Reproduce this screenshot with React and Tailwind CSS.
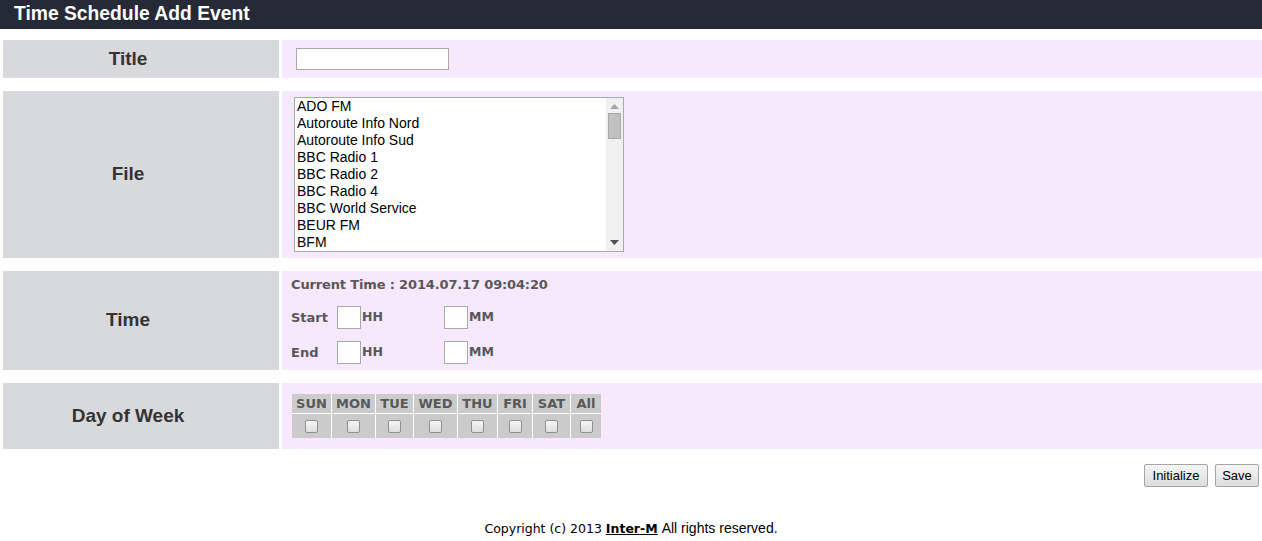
import React from "react";

const items = [
  "ADO FM",
  "Autoroute Info Nord",
  "Autoroute Info Sud",
  "BBC Radio 1",
  "BBC Radio 2",
  "BBC Radio 4",
  "BBC World Service",
  "BEUR FM",
  "BFM",
];

const days = [
  ["SUN", "w-[39px]"],
  ["MON", "w-[43px]"],
  ["TUE", "w-[37px]"],
  ["WED", "w-[43px]"],
  ["THU", "w-[39px]"],
  ["FRI", "w-[34px]"],
  ["SAT", "w-[37px]"],
  ["All", "w-[30px]"],
];

function Row({ label, h, children, className = "" }) {
  return (
    <div className="flex gap-[3px] pl-[3px]" style={{ height: h }}>
      <div className="w-[276px] shrink-0 bg-[#d8d9dc] flex items-center justify-center pr-[26px] text-[19px] font-bold text-[#333]">
        {label}
      </div>
      <div className={"flex-1 bg-[#f6e9fd] " + className}>{children}</div>
    </div>
  );
}

function Check() {
  return (
    <span className="block w-[13px] h-[13px] rounded-[2px] border border-[#8e8f8f] bg-gradient-to-b from-[#f6f6f6] to-[#dedede]" />
  );
}

function SmallBox() {
  return <span className="block w-[24px] h-[23px] bg-white border border-[#a9a9a9]" />;
}

export default function App() {
  return (
    <div className="w-[1262px] h-[541px] bg-white font-['Liberation_Sans',Arial,sans-serif] overflow-hidden">
      <div className="h-[29px] bg-[#262a36] flex items-center pl-[14px] text-white text-[19.3px] font-bold">
        Time Schedule Add Event
      </div>

      <div className="mt-[11px] flex flex-col gap-[13px]">
        <Row label="Title" h={38} className="flex items-center pl-[14px]">
          <span className="block w-[153px] h-[22px] bg-white border border-[#a9a9a9]" />
        </Row>

        <Row label="File" h={167} className="pt-[6px] pl-[12px]">
          <div className="w-[330px] h-[155px] bg-white border border-[#a9a9a9] flex">
            <div className="flex-1 pl-[2px] text-[14px] leading-[17px] text-black">
              {items.map((t) => (
                <div key={t}>{t}</div>
              ))}
            </div>
            <div className="w-[17px] bg-[#f0f0f0] flex flex-col items-center">
              <svg width="9" height="5" viewBox="0 0 9 5" className="mt-[6px]">
                <polygon points="4.5,0 9,5 0,5" fill="#a3a3a3" />
              </svg>
              <span className="block mt-[4px] w-[13px] h-[26px] bg-[#c1c1c1] border border-[#a8a8a8]" />
              <svg width="9" height="5" viewBox="0 0 9 5" className="mt-auto mb-[6px]">
                <polygon points="0,0 9,0 4.5,5" fill="#505050" />
              </svg>
            </div>
          </div>
        </Row>

        <Row label="Time" h={99} className="pl-[9px] pt-[6px] font-['DejaVu_Sans',Verdana,sans-serif] font-bold text-[13px] text-[#585858]">
          <div className="h-[15px] leading-[15px] tracking-[-0.15px]">Current Time : 2014.07.17 09:04:20</div>
          <div className="flex items-center mt-[14px] h-[23px]">
            <span className="w-[46px]">Start</span>
            <SmallBox />
            <span className="w-[83px] pl-[1px] text-[12.5px]">HH</span>
            <SmallBox />
            <span className="pl-[1px] text-[12.5px]">MM</span>
          </div>
          <div className="flex items-center mt-[12px] h-[23px]">
            <span className="w-[46px]">End</span>
            <SmallBox />
            <span className="w-[83px] pl-[1px] text-[12.5px]">HH</span>
            <SmallBox />
            <span className="pl-[1px] text-[12.5px]">MM</span>
          </div>
        </Row>

        <Row label="Day of Week" h={66} className="pl-[10px] pt-[11px]">
          <div className="flex gap-px bg-white w-fit font-['DejaVu_Sans',Verdana,sans-serif] font-bold text-[13px] text-[#585858]">
            {days.map(([d, w]) => (
              <div key={d} className={"flex flex-col gap-px " + w}>
                <div className="h-[19px] bg-[#cbcbcb] flex items-center justify-center">
                  {d}
                </div>
                <div className="h-[24px] bg-[#cbcbcb] flex items-center justify-center">
                  <Check />
                </div>
              </div>
            ))}
          </div>
        </Row>
      </div>

      <div className="flex justify-end gap-[7px] pr-[3px] mt-[15px]">
        <button className="h-[23px] w-[64px] border border-[#a5a5a5] rounded-[2px] bg-gradient-to-b from-[#f5f5f5] to-[#dddddd] text-[13px] text-black">
          Initialize
        </button>
        <button className="h-[23px] w-[44px] border border-[#a5a5a5] rounded-[2px] bg-gradient-to-b from-[#f5f5f5] to-[#dddddd] text-[13px] text-black">
          Save
        </button>
      </div>

      <div className="mt-[34px] text-center text-[12.5px] leading-[15px] text-black font-['DejaVu_Sans',Verdana,sans-serif]">
        Copyright (c) 2013 <span className="font-bold underline">Inter-M</span>{" "}
        <span className="font-['Liberation_Sans',Arial,sans-serif] text-[14px]">All rights reserved.</span>
      </div>
    </div>
  );
}
